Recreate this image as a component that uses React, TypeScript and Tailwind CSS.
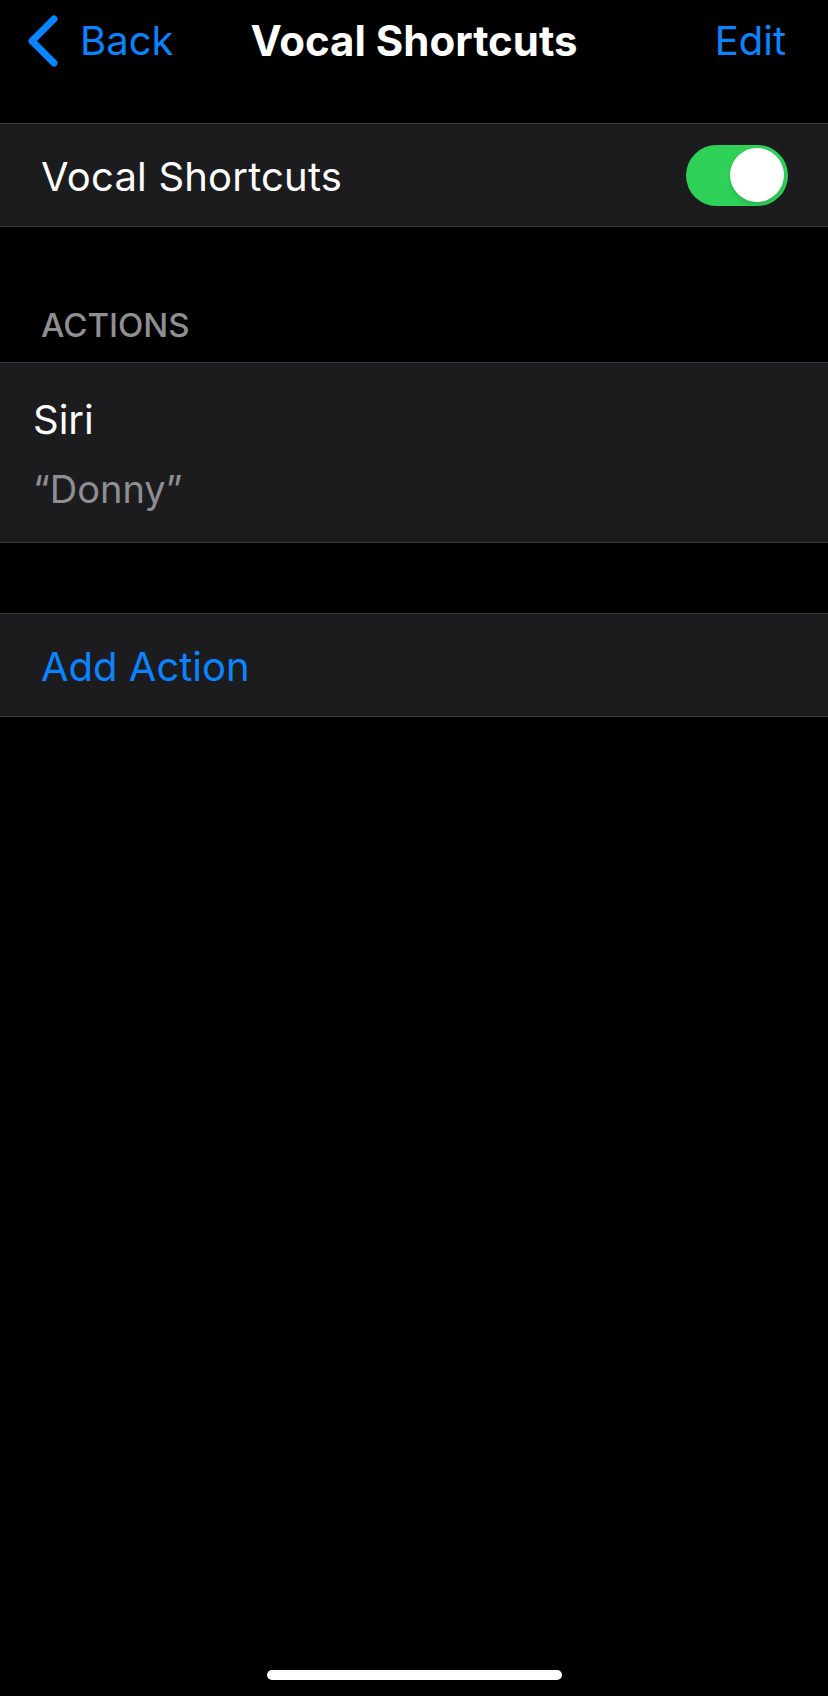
export default function App() {
  return (
    <div
      className="w-full h-[1696px] bg-black flex flex-col text-white"
      style={{ fontFamily: 'Inter, "Noto Sans", sans-serif' }}
    >
      {/* Nav bar */}
      <div className="h-[82px] grid grid-cols-[1fr_auto_1fr] items-center">
        <div className="flex items-center">
          <svg className="ml-[26px] w-[34px] h-[52px]" viewBox="0 0 34 52">
            <polyline
              points="28,4 6,26 28,48"
              fill="none"
              stroke="#0a84ff"
              strokeWidth="7"
              strokeLinecap="round"
              strokeLinejoin="round"
            />
          </svg>
          <span className="ml-[20px] text-[40px] leading-[48px] text-[#0a84ff]">Back</span>
        </div>
        <h1 className="text-[42px] leading-[48px] font-bold">Vocal Shortcuts</h1>
        <div className="flex justify-end pr-[42px]">
          <span className="text-[40px] leading-[48px] text-[#0a84ff]">Edit</span>
        </div>
      </div>

      {/* Toggle row */}
      <div className="mt-[41px] h-[104px] bg-[#1c1c1e] border-y border-[#38383a] flex items-center justify-between pl-[41px] pr-[40px]">
        <span className="text-[40px] leading-[48px] pt-[4px] tracking-[0.2px]">Vocal Shortcuts</span>
        <div className="w-[102px] h-[61px] rounded-full bg-[#30d158] flex items-center justify-end pr-[4px]">
          <div className="w-[54px] h-[54px] rounded-full bg-white shadow-md" />
        </div>
      </div>

      {/* Section header */}
      <div className="h-[135px] flex items-end pl-[41px] pb-[17px]">
        <span className="text-[33px] leading-[40px] text-[#8e8e93] font-medium">ACTIONS</span>
      </div>

      {/* Siri row */}
      <div className="bg-[#1c1c1e] border-y border-[#38383a] pl-[33px] pt-[33px] pb-[30px] flex flex-col">
        <span className="text-[40px] leading-[48px]">Siri</span>
        <span className="mt-[22px] text-[38px] leading-[46px] text-[#8e8e93]">“Donny”</span>
      </div>

      {/* Add Action row */}
      <div className="mt-[70px] h-[104px] bg-[#1c1c1e] border-y border-[#38383a] flex items-center pl-[41px]">
        <span className="text-[40px] leading-[48px] pt-[4px] text-[#0a84ff]">Add Action</span>
      </div>

      {/* Home indicator */}
      <div className="mt-auto mb-[16px] flex justify-center">
        <div className="w-[295px] h-[10px] rounded-full bg-white" />
      </div>
    </div>
  );
}
